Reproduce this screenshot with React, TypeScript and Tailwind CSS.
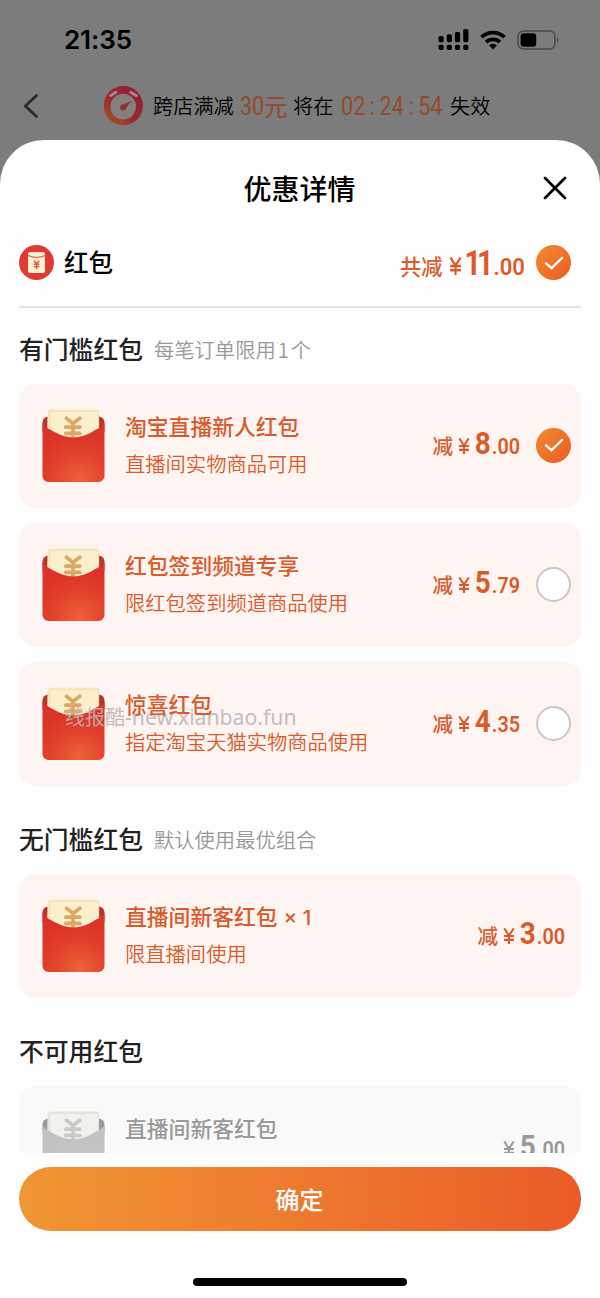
import type { ReactNode } from "react"
import clsx from "clsx"

const CJK = "font-['Noto_Sans_CJK_SC',sans-serif]"

type Coupon = {
    title: string
    count?: string
    desc?: string
    yuan: string
    cents: string
    state?: "checked" | "unchecked"
    disabled?: boolean
}

const thresholdCoupons: Coupon[] = [
    { title: "淘宝直播新人红包", desc: "直播间实物商品可用", yuan: "8", cents: ".00", state: "checked" },
    { title: "红包签到频道专享", desc: "限红包签到频道商品使用", yuan: "5", cents: ".79", state: "unchecked" },
    { title: "惊喜红包", desc: "指定淘宝天猫实物商品使用", yuan: "4", cents: ".35", state: "unchecked" },
]

const freeCoupons: Coupon[] = [
    { title: "直播间新客红包", count: "× 1", desc: "限直播间使用", yuan: "3", cents: ".00" },
]

const disabledCoupons: Coupon[] = [
    { title: "直播间新客红包", yuan: "5", cents: ".00", disabled: true },
]

function StatusBar() {
    return (
        <div className="flex h-[80px] items-center pl-[64px] pr-[40px]">
            <span className="font-['Inter',sans-serif] text-[26px] font-semibold leading-none tracking-[-0.1px] text-black">21:35</span>
            <div className="ml-auto flex items-center">
                <svg width="31" height="22" viewBox="0 0 31 22" className="fill-black">
                    <rect x="0.5" y="7" width="5.2" height="6.2" rx="1.6" />
                    <rect x="8.7" y="5.2" width="5.2" height="8" rx="1.6" />
                    <rect x="16.9" y="3" width="5.2" height="10.2" rx="1.6" />
                    <rect x="25.2" y="0" width="5.2" height="13.2" rx="1.6" />
                    <rect x="0.5" y="15.8" width="5.2" height="5.2" rx="1.8" />
                    <rect x="8.7" y="15.8" width="5.2" height="5.2" rx="1.8" />
                    <rect x="16.9" y="15.8" width="5.2" height="5.2" rx="1.8" />
                    <rect x="25.2" y="15.8" width="5.2" height="5.2" rx="1.8" />
                </svg>
                <svg width="26" height="20" viewBox="0 0 26 20" fill="none" stroke="#000" strokeWidth="3.8" className="ml-[11px]">
                    <path d="M1.5 7.2 A16.5 16.5 0 0 1 24.5 7.2" />
                    <path d="M6.1 12.2 A10 10 0 0 1 19.9 12.2" />
                    <path d="M9 15.3 A5.8 5.8 0 0 1 17 15.3 L13 19.5 Z" fill="#000" stroke="none" />
                </svg>
                <svg width="43" height="20" viewBox="0 0 43 20" className="ml-[11px]">
                    <rect x="1" y="1" width="37" height="18" rx="5.5" fill="none" stroke="#484848" strokeWidth="1.4" />
                    <rect x="3.6" y="3.2" width="15.6" height="13.6" rx="3" fill="#000" />
                    <path d="M40 7 q2.4 3 0 6z" fill="#484848" />
                </svg>
            </div>
        </div>
    )
}

function StopwatchIcon() {
    return (
        <svg width="40" height="40" viewBox="0 0 40 40">
            <defs>
                <linearGradient id="watch" x1="0.1" y1="0.8" x2="0.7" y2="0.1">
                    <stop offset="0" stopColor="#a24a26" />
                    <stop offset="0.5" stopColor="#9a2630" />
                    <stop offset="1" stopColor="#941f35" />
                </linearGradient>
            </defs>
            <circle cx="20.3" cy="19.7" r="19.6" fill="url(#watch)" />
            <circle cx="20.2" cy="20.6" r="12.8" fill="#858080" />
            <path d="M7.6 9.6 L13 6.2 M27.6 6.2 L33.4 9.8" stroke="#a08a8a" strokeWidth="2.8" strokeLinecap="round" />
            <path d="M18.4 19.6 L28.4 14.8 L22.4 23 Z" fill="#962c34" />
            <circle cx="20.2" cy="21.4" r="3" fill="#962c34" />
        </svg>
    )
}

function NavBar() {
    return (
        <div className={clsx(CJK, "flex h-[52px] items-center pl-[23px] text-[20.2px] font-[350] leading-[30px] text-black")}>
            <svg width="18" height="26" viewBox="0 0 18 26" fill="none" stroke="#2c2c2c" strokeWidth="3" strokeLinecap="round" strokeLinejoin="round">
                <path d="M13.5 2.5 L2.4 13 L13.5 23.5" />
            </svg>
            <div className="ml-[62px]">
                <StopwatchIcon />
            </div>
            <span className="ml-[10px] w-[81px] whitespace-nowrap">跨店满减</span>
            <span className="ml-[6px] flex w-[48px] items-center whitespace-nowrap text-[#924a2b]">
                <span className="w-[24px]">
                    <span className="inline-block origin-left scale-x-[0.84] font-['Roboto',sans-serif] text-[25.5px] font-normal">30</span>
                </span>
                <span className="text-[23.5px] font-normal">元</span>
            </span>
            <span className="ml-[5px] w-[41px] whitespace-nowrap">将在</span>
            <span className="ml-[7px] w-[102px] whitespace-nowrap font-['Roboto',sans-serif] text-[26px] font-normal text-[#924a2b]">
                <span className="inline-block origin-left scale-x-[0.83]">
                    02<span className="mx-[5.5px]">:</span>24<span className="mx-[5.5px]">:</span>54
                </span>
            </span>
            <span className="ml-[7px] whitespace-nowrap">失效</span>
        </div>
    )
}

function RoundCheck({ checked }: { checked: boolean }) {
    if (!checked) {
        return <div className="size-[35px] shrink-0 rounded-full border-2 border-[#cbc8c8] bg-white" />
    }
    return (
        <div className="flex size-[35px] shrink-0 items-center justify-center rounded-full bg-linear-to-br from-[#f08a2c] to-[#ec5a28]">
            <svg width="20" height="16" viewBox="0 0 20 16" fill="none" stroke="#fff" strokeWidth="2.4">
                <path d="M2 8.4 L7.6 13.2 L18 3" strokeLinecap="round" />
            </svg>
        </div>
    )
}

function Packet({ disabled }: { disabled?: boolean }) {
    const id = disabled ? "packet-off" : "packet-on"
    return (
        <svg width="64" height="74" viewBox="0 0 64 74" className="shrink-0">
            <defs>
                <radialGradient id={id} cx="0.6" cy="0.95" r="0.8">
                    <stop offset="0" stopColor={disabled ? "#cacaca" : "#ee6338"} />
                    <stop offset="0.5" stopColor={disabled ? "#c6c6c6" : "#e3442d"} />
                    <stop offset="1" stopColor={disabled ? "#c2c2c2" : "#dc3328"} />
                </radialGradient>
            </defs>
            <rect x="0.5" y="7.5" width="62" height="20" rx="6" fill={disabled ? "#999" : "#bb3428"} />
            <path d="M5.6 3 q0-2.5 2.5-2.5 h46.5 q2.5 0 2.5 2.5 V38 H4.8z" fill={disabled ? "#e7e7e4" : "#faebc3"} />
            <rect x="7.6" y="2.2" width="49" height="34" fill={disabled ? "#f1f1ed" : "#fbf0cd"} stroke={disabled ? "#deded9" : "#efdcaa"} strokeWidth="0.9" />
            <path
                d="M24.4 9.2 L31 14.4 L37.8 9.2 M31 14.4 V30 M23.8 18.2 H37.8 M23.8 24.4 H37.8"
                fill="none"
                stroke={disabled ? "#c9c9c6" : "#dda768"}
                strokeWidth="3.7"
                strokeLinecap="round"
            />
            <path d="M0.5 14 C2 18.5 7 19.5 12 22.8 Q31.5 34 50 23 C55 19.5 61 18 62.5 14 V67 a6 6 0 0 1 -6 6 H6.5 a6 6 0 0 1 -6 -6z" fill={`url(#${id})`} />
        </svg>
    )
}

function Price({ label, yuan, cents, large }: { label?: string; yuan: string; cents: string; large?: boolean }) {
    return (
        <div className="flex items-baseline whitespace-nowrap font-medium">
            {label && <span className={large ? "text-[21.2px]" : "text-[20.5px]"}>{label}</span>}
            <svg
                width={large ? 13 : 12}
                height={large ? 18 : 16}
                viewBox="0 0 14 18"
                preserveAspectRatio="none"
                fill="none"
                stroke="currentColor"
                strokeWidth="2.4"
                className={large ? "ml-[7px]" : "ml-[5px]"}
            >
                <path d="M1.5 0.5 L7 8.5 L12.5 0.5 M7 8.5 V18 M1.2 9 H12.8 M1.2 13.3 H12.8" />
            </svg>
            <span
                className={clsx(
                    "inline-block origin-right font-['Roboto',sans-serif] font-bold leading-none",
                    large ? "-ml-[3px] mr-[2px] scale-x-[0.82] tracking-[-4.8px] text-[35px]" : "ml-[3px] scale-x-[0.9] text-[31px] -mr-px"
                )}
            >
                {yuan}
            </span>
            <span
                className={clsx(
                    "inline-block origin-right font-['Roboto',sans-serif] font-semibold leading-none",
                    large ? "-ml-[2px] scale-x-[0.9] text-[24.5px]" : "-ml-[2px] scale-x-[0.88] text-[22.5px]"
                )}
            >
                {cents}
            </span>
        </div>
    )
}

function CouponCard({ coupon }: { coupon: Coupon }) {
    const { title, count, desc, yuan, cents, state, disabled } = coupon
    return (
        <div
            className={clsx(
                "flex h-[124.4px] items-center rounded-[17px] pl-[23px]",
                state ? "pr-[10px]" : "pr-[16px]",
                disabled ? "bg-[#f9f9f9] text-[#999]" : "bg-[#fef4f1] text-[#d95b2b]"
            )}
        >
            <Packet disabled={disabled} />
            <div className="ml-[19px] flex h-[124px] flex-col pt-[25px]">
                <div className="relative z-10 text-[21.8px] font-medium leading-[34px]">
                    {title}
                    {count && <span className="ml-[6px] font-['Inter',sans-serif] text-[20.5px] leading-none">{count}</span>}
                </div>
                {desc && <div className="mt-[3px] text-[20.3px] font-[350] leading-[34px]">{desc}</div>}
            </div>
            <div className="mb-[3px] ml-auto">
                <Price label={disabled ? undefined : "减"} yuan={yuan} cents={cents} />
            </div>
            {state && (
                <div className="mb-px ml-[16px]">
                    <RoundCheck checked={state === "checked"} />
                </div>
            )}
        </div>
    )
}

function Section({ title, hint, coupons }: { title: string; hint?: ReactNode; coupons: Coupon[] }) {
    return (
        <section>
            <div className="flex h-[36px] items-center pb-[2px]">
                <h3 className="text-[24.8px] font-medium text-[#222]">{title}</h3>
                {hint && <span className="ml-[11px] text-[20.3px] font-[350] text-[#999]">{hint}</span>}
            </div>
            <div className="mt-[16px] flex flex-col gap-[14.6px]">
                {coupons.map((c) => (
                    <CouponCard key={c.title} coupon={c} />
                ))}
            </div>
        </section>
    )
}

export default function App() {
    return (
        <div className="relative flex h-[1298px] w-[600px] flex-col overflow-hidden bg-[#7c7c7c]">
            {/* DIMMED PAGE */}
            <div className="h-[140px] shrink-0">
                <StatusBar />
                <NavBar />
            </div>

            {/* SHEET */}
            <div className={clsx(CJK, "flex flex-1 flex-col rounded-t-[44px] bg-[#fefefe] px-[19px]")}>
                <div className="grid h-[96px] shrink-0 grid-cols-[1fr_auto_1fr] items-center">
                    <span />
                    <h2 className="pr-px text-[28px] font-medium text-black">优惠详情</h2>
                    <svg width="24" height="24" viewBox="0 0 24 24" fill="none" stroke="#000" strokeWidth="2.8" strokeLinecap="round" className="mr-[14px] justify-self-end">
                        <path d="M2 2 L22 22 M22 2 L2 22" />
                    </svg>
                </div>

                {/* TOTAL */}
                <div className="flex h-[72px] shrink-0 items-start border-b-2 border-[#e4e4e4] pr-[10px]">
                    <div className="mt-[8.5px] flex h-[36px] items-center">
                        <svg width="35" height="35" viewBox="0 0 35 35">
                            <circle cx="17.5" cy="17.5" r="17.5" fill="#e13a32" />
                            <rect x="9" y="7" width="17" height="21" rx="2" fill="#fdf1d2" />
                            <path d="M9 10.6 Q17.5 14 26 10.6" fill="none" stroke="#e5684f" strokeWidth="1.2" />
                            <path d="M14.9 15.6 L17.6 18.8 L20.3 15.6 M17.6 18.8 V24 M14.8 19.2 H20.4 M14.8 21.6 H20.4" fill="none" stroke="#df5540" strokeWidth="1.4" />
                        </svg>
                        <span className="ml-[10px] text-[24.5px] font-medium text-black">红包</span>
                    </div>
                    <div className="ml-auto mt-[8.5px] flex h-[36px] items-center text-[#e0592a]">
                        <div className="pt-[3px]">
                            <Price label="共减" yuan="11" cents=".00" large />
                        </div>
                        <div className="ml-[11px]">
                            <RoundCheck checked />
                        </div>
                    </div>
                </div>

                {/* COUPON LIST */}
                <div className="flex h-[845px] shrink-0 flex-col gap-[35.6px] overflow-hidden pt-[23.8px]">
                    <Section
                        title="有门槛红包"
                        hint={<>每笔订单限用<span className="mx-[2px]">1</span>个</>}
                        coupons={thresholdCoupons}
                    />
                    <Section title="无门槛红包" hint="默认使用最优组合" coupons={freeCoupons} />
                    <Section title="不可用红包" coupons={disabledCoupons} />
                </div>

                <button className="mt-[14px] h-[64px] shrink-0 rounded-full bg-linear-to-r from-[#f09634] to-[#ea5a28] pr-px text-[24px] font-medium text-white">
                    确定
                </button>
                <div className="mt-[47px] h-[8px] w-[214px] shrink-0 self-center rounded-full bg-black" />
            </div>

            {/* WATERMARK */}
            <div className={clsx(CJK, "absolute left-[65px] top-[702px] z-[5] whitespace-nowrap text-[20px] leading-[30px] text-[#bbb6b5]/90")}>
                线报酷<span className="font-['Noto_Sans',sans-serif] text-[21.2px]">-new.xianbao.fun</span>
            </div>
        </div>
    )
}
